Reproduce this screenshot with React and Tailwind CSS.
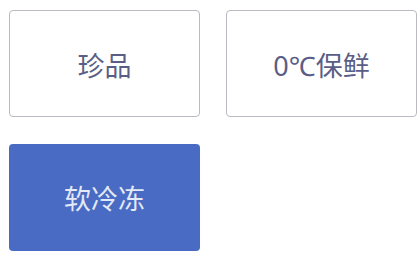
export default function App() {
  const font = { fontFamily: '"Noto Sans", "Noto Sans CJK SC", sans-serif' };
  return (
    <main className="w-[418px] h-[253px] bg-white pt-[10px] pl-[9px]" style={font}>
      <div className="grid grid-cols-[191px_191px] gap-x-[26px] gap-y-[27px]">
        <div className="h-[107px] rounded-[4px] border border-[#b9bac3] bg-white flex items-center justify-center pt-[6px] text-[27px] text-[#5a5e86]">
          珍品
        </div>
        <div className="h-[107px] rounded-[4px] border border-[#b9bac3] bg-white flex items-center justify-center pt-[6px] text-[27px] text-[#5a5e86]">
          0℃保鲜
        </div>
        <div className="h-[107px] rounded-[4px] bg-[#4a6bc3] flex items-center justify-center pt-[4px] text-[27px] text-[#e3e9f6]">
          软冷冻
        </div>
      </div>
    </main>
  );
}
